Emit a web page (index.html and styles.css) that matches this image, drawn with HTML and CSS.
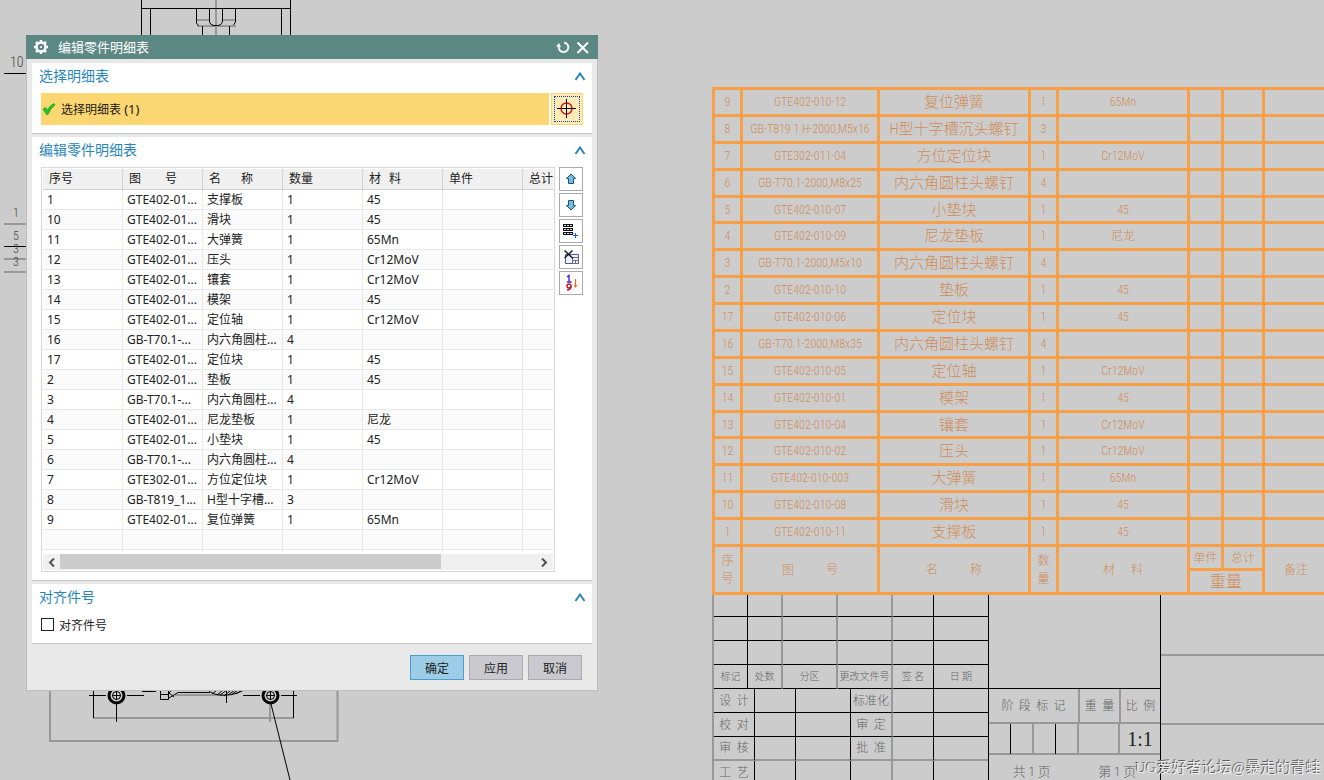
FILE: index.html
```html
<!DOCTYPE html>
<html lang="zh-CN">
<head>
<meta charset="utf-8">
<title>编辑零件明细表</title>
<link rel="stylesheet" href="styles.css">
</head>
<body>
<main class="canvas">
  <svg class="drawing" width="340" height="780" viewBox="0 0 340 780" aria-hidden="true">
    <g class="ln-gray">
      <path d="M216 0V36M196 20H209M223 20H235M197 26H236M4 224H27M4 259H27M4 272H27"/>
      <path d="M93 718H294M270 704V722M175 695H226"/>
    </g>
    <path class="ln-mid" d="M50 690V741H337.500V690"/>
    <g class="ln">
      <path d="M141.500 0V36M290.500 0V36M141.500 8.500H290.500M150.500 8V36M281.500 8V36M196.500 9V23L198.500 25.500M209.500 9V22Q210.500 25.500 214 25.500H218Q222.500 25 222.500 20V9M235.500 9V22L233.500 25M202.500 26V36M229.500 26V36"/>
      <path d="M4 73.500H27M4 246.500H27"/>
      <path d="M93.500 690V718M293.500 690V718M89 695.500H106M127 695.500H144M243 695.500H260M281 695.500H297M116.500 704V722M271 704L290 780M142 691.500H156M226.500 690V703"/>
      <path d="M160.500 691V699.500H168.500V691M160.500 694.500H168.500M169 698L178 692.500H210M169 693L174 697M172 690L168 694M208 690C214 697 232 697 244 690M212 694L217 690M217 695L223 690M220 695L227 690M224 696L230 691M228 695L235 690M231 695L238 690M236 694L242 690"/>
      <circle cx="116.500" cy="695.500" r="4"/><circle cx="270.500" cy="695.500" r="4"/>
      <path d="M112 695.500H121M116.500 691V700M266 695.500H275M270.500 691V700"/>
    </g>
    <circle class="ring" cx="116.500" cy="695.500" r="7.500"/><circle class="ring" cx="270.500" cy="695.500" r="7.500"/>
    <g class="note">
      <text x="10" y="67" class="note-large">10</text>
      <text x="13" y="217">1</text><text x="13" y="240">5</text><text x="13" y="253">3</text><text x="13" y="266">3</text>
    </g>
  </svg>

  <section class="sheet">
    <table class="parts">
      <colgroup><col class="p-no"><col class="p-code"><col class="p-name"><col class="p-qty"><col class="p-mat"><col class="p-unit"><col class="p-total"><col></colgroup>
      <tbody>
        <tr><td>9</td><td>GTE402-010-12</td><td class="cn">复位弹簧</td><td>1</td><td>65Mn</td><td></td><td></td><td></td></tr>
        <tr><td>8</td><td>GB-T819 1 H-2000,M5x16</td><td class="cn">H型十字槽沉头螺钉</td><td>3</td><td></td><td></td><td></td><td></td></tr>
        <tr><td>7</td><td>GTE302-011-04</td><td class="cn">方位定位块</td><td>1</td><td>Cr12MoV</td><td></td><td></td><td></td></tr>
        <tr><td>6</td><td>GB-T70.1-2000,M8x25</td><td class="cn">内六角圆柱头螺钉</td><td>4</td><td></td><td></td><td></td><td></td></tr>
        <tr class="tight"><td>5</td><td>GTE402-010-07</td><td class="cn">小垫块</td><td>1</td><td>45</td><td></td><td></td><td></td></tr>
        <tr><td>4</td><td>GTE402-010-09</td><td class="cn">尼龙垫板</td><td>1</td><td>尼龙</td><td></td><td></td><td></td></tr>
        <tr><td>3</td><td>GB-T70.1-2000,M5x10</td><td class="cn">内六角圆柱头螺钉</td><td>4</td><td></td><td></td><td></td><td></td></tr>
        <tr><td>2</td><td>GTE402-010-10</td><td class="cn">垫板</td><td>1</td><td>45</td><td></td><td></td><td></td></tr>
        <tr><td>17</td><td>GTE402-010-06</td><td class="cn">定位块</td><td>1</td><td>45</td><td></td><td></td><td></td></tr>
        <tr><td>16</td><td>GB-T70.1-2000,M8x35</td><td class="cn">内六角圆柱头螺钉</td><td>4</td><td></td><td></td><td></td><td></td></tr>
        <tr><td>15</td><td>GTE402-010-05</td><td class="cn">定位轴</td><td>1</td><td>Cr12MoV</td><td></td><td></td><td></td></tr>
        <tr><td>14</td><td>GTE402-010-01</td><td class="cn">模架</td><td>1</td><td>45</td><td></td><td></td><td></td></tr>
        <tr class="tight"><td>13</td><td>GTE402-010-04</td><td class="cn">镶套</td><td>1</td><td>Cr12MoV</td><td></td><td></td><td></td></tr>
        <tr><td>12</td><td>GTE402-010-02</td><td class="cn">压头</td><td>1</td><td>Cr12MoV</td><td></td><td></td><td></td></tr>
        <tr><td>11</td><td>GTE402-010-003</td><td class="cn">大弹簧</td><td>1</td><td>65Mn</td><td></td><td></td><td></td></tr>
        <tr><td>10</td><td>GTE402-010-08</td><td class="cn">滑块</td><td>1</td><td>45</td><td></td><td></td><td></td></tr>
        <tr><td>1</td><td>GTE402-010-11</td><td class="cn">支撑板</td><td>1</td><td>45</td><td></td><td></td><td></td></tr>
      </tbody>
      <tfoot>
        <tr><th rowspan="2">序<br>号</th><th rowspan="2"><span class="pair wide"><span>图</span><span>号</span></span></th><th rowspan="2"><span class="pair wide"><span>名</span><span>称</span></span></th><th rowspan="2">数<br>量</th><th rowspan="2"><span class="pair"><span>材</span><span>料</span></span></th><th>单件</th><th>总计</th><th rowspan="2">备注</th></tr>
        <tr><th colspan="2" class="weight">重量</th></tr>
      </tfoot>
    </table>

    <div class="title-block">
      <div class="tb-left">
        <div class="changes">
          <i></i><i></i><i></i><i></i><i></i><i></i>
          <i></i><i></i><i></i><i></i><i></i><i></i>
          <i></i><i></i><i></i><i></i><i></i><i></i>
          <span>标记</span><span>处数</span><span>分区</span><span>更改文件号</span><span>签 名</span><span>日 期</span>
        </div>
        <div class="signs">
          <span>设&nbsp; 计</span><i></i><i></i><span>标准化</span><i></i><i></i>
          <span>校&nbsp; 对</span><i></i><i></i><span>审&nbsp; 定</span><i></i><i></i>
          <span>审&nbsp; 核</span><i></i><i></i><span>批&nbsp; 准</span><i></i><i></i>
          <span>工&nbsp; 艺</span><i></i><i></i><i></i><i></i><i></i>
        </div>
      </div>
      <div class="tb-mid">
        <div class="blank"></div>
        <div class="stage"><span>阶&nbsp; 段&nbsp; 标&nbsp; 记</span><span>重&nbsp; 量</span><span>比&nbsp; 例</span></div>
        <div class="stage-values"><i></i><i></i><i></i><i></i><i></i><b>1:1</b></div>
        <div class="pages"><span>共 1 页</span><span>第 1 页</span></div>
      </div>
      <div class="tb-right"><i></i><i></i><i></i></div>
    </div>
  </section>

  <section class="dialog" role="dialog" aria-labelledby="dlg-title">
    <header class="titlebar">
      <svg width="16" height="16" viewBox="0 0 16 16" aria-hidden="true"><circle cx="8" cy="8" r="4.500" fill="none" stroke="#fff" stroke-width="2.500"/><path d="M8 1V3M8 13V15M1 8H3M13 8H15M3 3L4.500 4.500M11.500 11.500L13 13M3 13L4.500 11.500M11.500 4.500L13 3" stroke="#fff" stroke-width="2.500"/><circle cx="8" cy="8" r="1" fill="#fff"/></svg>
      <h1 id="dlg-title">编辑零件明细表</h1>
      <button class="tool" aria-label="重置"><svg width="14" height="14" viewBox="0 0 14 14"><path d="M8 2.500A4.800 4.800 0 1 1 2.800 6.500" fill="none" stroke="#fff" stroke-width="1.900"/><path d="M0 6.500L3 3L5 7Z" fill="#fff"/></svg></button>
      <button class="tool" aria-label="关闭"><svg width="14" height="14" viewBox="0 0 14 14"><path d="M1.500 2.500L12 13M12 2.500L1.500 13" stroke="#fff" stroke-width="2"/></svg></button>
    </header>
    <div class="dialog-body">
      <section class="panel">
        <h2>选择明细表<button class="fold" aria-label="折叠"><svg width="12" height="10" viewBox="0 0 12 10"><path d="M1.500 9L6 2.500L10.500 9" fill="none" stroke="#2a86b8" stroke-width="2"/></svg></button></h2>
        <div class="pick-row">
          <div class="pick-label">
            <svg width="14" height="14" viewBox="0 0 14 14" aria-hidden="true"><path d="M1 7L3.500 5.500L5.500 8Q8 3 12 1.500L13 3Q8.500 6.500 6 12.500H4.500Z" fill="#20c82c" stroke="#109018" stroke-width=".6"/></svg>
            <span>选择明细表 <span class="latin">(1)</span></span>
          </div>
          <button class="pick" aria-label="选择对象"><span class="focus"><svg width="20" height="20" viewBox="0 0 20 20"><circle cx="9.500" cy="9.500" r="5.500" fill="none" stroke="#e01010" stroke-width="1.400"/><path d="M0 9.500H19M9.500 0V19" stroke="#000" stroke-width="1"/></svg></span></button>
        </div>
      </section>

      <section class="panel">
        <h2>编辑零件明细表<button class="fold" aria-label="折叠"><svg width="12" height="10" viewBox="0 0 12 10"><path d="M1.500 9L6 2.500L10.500 9" fill="none" stroke="#2a86b8" stroke-width="2"/></svg></button></h2>
        <div class="edit-row">
          <div class="listbox">
            <div class="viewport">
              <table class="list">
                <thead><tr><th>序号</th><th><span class="pair head">图<span>号</span></span></th><th><span class="pair head-mid">名<span>称</span></span></th><th>数量</th><th><span class="pair head-small">材<span>料</span></span></th><th>单件</th><th>总计</th></tr></thead>
                <tbody>
                  <tr><td>1</td><td>GTE402-01...</td><td class="zh">支撑板</td><td>1</td><td>45</td><td></td><td></td></tr>
                  <tr><td>10</td><td>GTE402-01...</td><td class="zh">滑块</td><td>1</td><td>45</td><td></td><td></td></tr>
                  <tr><td>11</td><td>GTE402-01...</td><td class="zh">大弹簧</td><td>1</td><td>65Mn</td><td></td><td></td></tr>
                  <tr><td>12</td><td>GTE402-01...</td><td class="zh">压头</td><td>1</td><td>Cr12MoV</td><td></td><td></td></tr>
                  <tr><td>13</td><td>GTE402-01...</td><td class="zh">镶套</td><td>1</td><td>Cr12MoV</td><td></td><td></td></tr>
                  <tr><td>14</td><td>GTE402-01...</td><td class="zh">模架</td><td>1</td><td>45</td><td></td><td></td></tr>
                  <tr><td>15</td><td>GTE402-01...</td><td class="zh">定位轴</td><td>1</td><td>Cr12MoV</td><td></td><td></td></tr>
                  <tr><td>16</td><td>GB-T70.1-...</td><td class="zh">内六角圆柱...</td><td>4</td><td></td><td></td><td></td></tr>
                  <tr><td>17</td><td>GTE402-01...</td><td class="zh">定位块</td><td>1</td><td>45</td><td></td><td></td></tr>
                  <tr><td>2</td><td>GTE402-01...</td><td class="zh">垫板</td><td>1</td><td>45</td><td></td><td></td></tr>
                  <tr><td>3</td><td>GB-T70.1-...</td><td class="zh">内六角圆柱...</td><td>4</td><td></td><td></td><td></td></tr>
                  <tr><td>4</td><td>GTE402-01...</td><td class="zh">尼龙垫板</td><td>1</td><td class="zh">尼龙</td><td></td><td></td></tr>
                  <tr><td>5</td><td>GTE402-01...</td><td class="zh">小垫块</td><td>1</td><td>45</td><td></td><td></td></tr>
                  <tr><td>6</td><td>GB-T70.1-...</td><td class="zh">内六角圆柱...</td><td>4</td><td></td><td></td><td></td></tr>
                  <tr><td>7</td><td>GTE302-01...</td><td class="zh">方位定位块</td><td>1</td><td>Cr12MoV</td><td></td><td></td></tr>
                  <tr><td>8</td><td>GB-T819_1...</td><td class="zh">H型十字槽...</td><td>3</td><td></td><td></td><td></td></tr>
                  <tr><td>9</td><td>GTE402-01...</td><td class="zh">复位弹簧</td><td>1</td><td>65Mn</td><td></td><td></td></tr>
                  <tr><td></td><td></td><td></td><td></td><td></td><td></td><td></td></tr>
                  <tr><td></td><td></td><td></td><td></td><td></td><td></td><td></td></tr>
                </tbody>
              </table>
            </div>
            <div class="scrollbar">
              <button aria-label="向左"><svg width="7" height="9" viewBox="0 0 7 9"><path d="M6 .5L2 4.500L6 8.500" fill="none" stroke="#505050" stroke-width="2"/></svg></button>
              <div class="track"><div class="thumb"></div></div>
              <button aria-label="向右"><svg width="7" height="9" viewBox="0 0 7 9"><path d="M1 .5L5 4.500L1 8.500" fill="none" stroke="#505050" stroke-width="2"/></svg></button>
            </div>
          </div>
          <div class="side">
            <button aria-label="上移"><svg width="16" height="16" viewBox="0 0 16 16"><path d="M8 3L12.500 7.500H10.500V12.500H5.500V7.500H3.500Z" fill="#6cc4dc" stroke="#24507c"/></svg></button>
            <button aria-label="下移"><svg width="16" height="16" viewBox="0 0 16 16"><path d="M8 13L12.500 8.500H10.500V3.500H5.500V8.500H3.500Z" fill="#6cc4dc" stroke="#24507c"/></svg></button>
            <button aria-label="添加行"><svg width="16" height="16" viewBox="0 0 16 16"><path d="M0 1H10V4H0ZM0 5H10V8H0ZM0 9H10V12H0Z" fill="#101010"/><path d="M1 2.500H3M4 2.500H6M7 2.500H9M1 6.500H3M4 6.500H6M7 6.500H9M1 10.500H3M4 10.500H6M7 10.500H9" stroke="#d8d8f0"/><path d="M10 12.500H15M12.500 10V15" stroke="#1060f0"/></svg></button>
            <button aria-label="删除行"><svg width="16" height="16" viewBox="0 0 16 16"><path d="M2.500 5.500H15.500V14.500H2.500Z" fill="#eef0ff" stroke="#4858b8"/><path d="M9.500 14V8.500H15.500V14.500H9.500M9.500 11.500H15.500M12.500 11.500V14" fill="none" stroke="#707080"/><path d="M1.500 1.500L10 9.500M9.500 1.500L1.500 9" stroke="#202020" stroke-width="1.500"/></svg></button>
            <button aria-label="排序"><svg width="16" height="18" viewBox="0 0 16 18"><path d="M4 3L6 1.500V8M4 8H8.500" fill="none" stroke="#4820d8" stroke-width="1.400"/><circle cx="6" cy="12" r="2" fill="none" stroke="#c01830" stroke-width="1.500"/><path d="M8 12Q8 16 4 16" fill="none" stroke="#c01830" stroke-width="1.500"/><path d="M12.500 5V13" stroke="#d07020" stroke-width="1.300"/><path d="M10.500 11L12.500 14L14.500 11Z" fill="#e07820"/></svg></button>
          </div>
        </div>
      </section>

      <section class="panel">
        <h2>对齐件号<button class="fold" aria-label="折叠"><svg width="12" height="10" viewBox="0 0 12 10"><path d="M1.500 9L6 2.500L10.500 9" fill="none" stroke="#2a86b8" stroke-width="2"/></svg></button></h2>
        <label class="check"><input type="checkbox">对齐件号</label>
      </section>
      <footer class="actions"><button class="primary">确定</button><button>应用</button><button>取消</button></footer>
    </div>
  </section>

  <p class="watermark">UG爱好者论坛@暴走的青蛙</p>
</main>
</body>
</html>
```
FILE: styles.css
```css
* { box-sizing: border-box; }
body { margin: 0; background: #ccc; font-family: "Noto Sans", "Noto Sans CJK SC", sans-serif; font-size: 12px; color: #222; }
h1, h2, p { margin: 0; font-weight: 400; }
button { padding: 0; font: inherit; color: inherit; border: 0; background: none; display: flex; align-items: center; justify-content: center; }
i { display: block; }

.canvas { position: relative; height: 100vh; overflow: hidden; }
.drawing { position: absolute; left: 0; top: 0; }
.ln, .ln-gray, .ln-mid, .ring { fill: none; stroke: #000; stroke-width: 1; }
.ln-gray { stroke: #989898; stroke-width: 2; }
.ln-mid { stroke: #989898; stroke-width: 2; }
.ring { stroke-width: 3; }
.note { font-family: "Roboto Condensed", "Liberation Serif", sans-serif; font-size: 12px; font-weight: 300; fill: #444; }
.note-large { font-size: 14px; }

/* parts list */
.sheet { position: absolute; left: 712px; right: -6px; top: 87px; font-family: "Roboto Condensed", "Liberation Serif", "Noto Sans CJK SC", sans-serif; }
.parts { width: 100%; table-layout: fixed; border-collapse: collapse; color: #d08c58; font-size: 12px; line-height: 14px; }
.parts td, .parts th { border: 3px solid #f8a048; padding: 0; text-align: center; font-weight: 300; white-space: nowrap; }
.parts tr { height: 27px; }
.parts .tight { height: 26px; }
.parts tfoot tr { height: 24px; }
.parts .cn { font-size: 15px; }
.parts th { font-size: 12px; line-height: 18px; }
.parts .weight { font-size: 16px; }
.p-no, .p-qty { width: 28px; }
.p-code { width: 137px; }
.p-name { width: 151px; }
.p-mat { width: 131px; }
.p-unit { width: 34px; }
.p-total { width: 41px; }
.pair { display: inline-flex; gap: 16px; }
.pair.wide { gap: 32px; }

/* drawing title block */
.title-block { display: flex; height: 220px; color: #666; font-size: 12px; font-weight: 300; line-height: 14px; white-space: nowrap; }
.title-block span { display: flex; align-items: center; justify-content: center; }
.tb-left { width: 277px; border-left: 2px solid #989898; border-right: 1px solid #000; }
.changes { display: grid; grid-template-columns: 34px 35px 55px 55px 41px 1fr; grid-template-rows: 22px 24px 24px 24px; font-size: 10px; }
.signs { display: grid; grid-template-columns: 41px 41px 55px 42px 41px 1fr; grid-auto-rows: 24px; }
.changes > *, .signs > * { border-right: 1px solid #000; border-bottom: 1px solid #000; }
.changes > :nth-child(6n+2), .changes > :nth-child(6n+3), .changes > :nth-child(6n+4), .signs > :nth-child(6n+4) { border-right: 2px solid #989898; }
.signs > :nth-child(n+13):nth-child(-n+18) { border-bottom: 2px solid #989898; }
.changes > :nth-child(6n), .signs > :nth-child(6n) { border-right: 0; }
.tb-mid { width: 172px; border-right: 1px solid #000; }
.blank { height: 94px; border-bottom: 1px solid #000; }
.stage { display: grid; grid-template-columns: 89px 41px 1fr; height: 35px; border-bottom: 2px solid #989898; }
.stage span + span { border-left: 2px solid #989898; }
.stage-values { display: grid; grid-template-columns: 22px 23px 22px 23px 41px 1fr; height: 31px; border-bottom: 2px solid #989898; }
.stage-values i { border-right: 2px solid #989898; }
.stage-values i:nth-child(1), .stage-values i:nth-child(3) { border-right: 1px solid #000; }
.stage-values b { font-family: "Liberation Serif", serif; font-size: 20px; font-weight: 400; line-height: 30px; text-align: center; color: #222; }
.pages { display: flex; justify-content: space-around; padding-top: 10px; font-size: 13px; }
.tb-right { flex: 1; display: grid; grid-template-rows: 59px 69px 1fr; }
.tb-right i + i { border-top: 2px solid #989898; }

/* dialog */
.dialog { position: absolute; left: 26px; top: 35px; width: 572px; }
.titlebar { display: flex; align-items: center; gap: 6px; height: 24px; padding: 0 8px 0 7px; background: #5c8883; color: #fff; }
.titlebar h1 { flex: 1; padding-left: 3px; font-size: 13px; line-height: 24px; }
.tool { width: 14px; height: 24px; }
.dialog-body { display: flex; flex-direction: column; gap: 3px; padding: 4px 5px 10px; background: #e8e8e8; border: 1px solid #bebebe; border-top: 0; }
.panel { padding: 0 9px 8px; background: #fff; border-bottom: 1px solid #c4c4c4; }
.panel h2 { display: flex; justify-content: space-between; align-items: center; height: 30px; margin: 0 -3px 0 -2px; padding-bottom: 4px; font-size: 14px; line-height: 20px; color: #2a86b8; }
.fold { width: 12px; height: 12px; }
.pick-row { display: flex; gap: 2px; height: 32px; }
.pick-label { flex: 1; display: flex; align-items: center; gap: 5px; padding-left: 1px; background: #fcd670; }
.latin { font-size: 13px; }
.pick { width: 32px; border: 1px solid #fcd670; background: #fcebb4; }
.focus { padding: 2px; width: 26px; height: 26px; border: 1px dotted #1040b0; }
.focus svg { display: block; }
.edit-row { display: flex; gap: 4px; }
.listbox { flex: 1; min-width: 0; padding: 1px; border: 1px solid #d8d8d8; }
.viewport { height: 383px; overflow: hidden; margin-bottom: 2px; }
.list { width: 560px; table-layout: fixed; border-collapse: separate; border-spacing: 0; font-size: 12px; line-height: 16px; }
.list th { height: 21px; padding: 0 0 0 6px; text-align: left; font-weight: 400; background: #f0f0f0; border-right: 1px solid #d0d0d0; border-bottom: 1px solid #d0d0d0; white-space: nowrap; }
.list td { height: 20px; padding: 0 0 0 4px; border-right: 1px solid #e8e8e8; border-bottom: 1px solid #e8e8e8; white-space: nowrap; }
.list tbody tr:nth-child(even) { background: #fafafa; }
.pair.head { gap: 24px; }
.pair.head-mid { gap: 20px; }
.pair.head-small { gap: 8px; }
.scrollbar { display: flex; height: 16px; background: #f0f0f0; }
.scrollbar button { width: 17px; }
.track { flex: 1; }
.thumb { width: 80%; height: 15px; background: #ccc; }
.side { display: flex; flex-direction: column; gap: 2px; }
.side button { width: 24px; height: 24px; border: 1px solid #aaa; background: #fff; }
.check { display: flex; align-items: center; gap: 5px; height: 21px; }
.check input { appearance: none; width: 13px; height: 13px; margin: 0; border: 1px solid #222; background: #fff; }
.actions { display: flex; justify-content: flex-end; gap: 5px; padding: 8px 10px 0 0; }
.actions button { width: 54px; height: 25px; border: 1px solid #acacac; background: #c9c9cf; }
.actions .primary { border-color: #4ca0d0; background: #9ccce6; }

.watermark { position: absolute; right: 3px; bottom: 1px; font-family: "Liberation Serif", "Noto Sans CJK SC", serif; font-size: 15px; line-height: 22px; color: #ececec; text-shadow: -1px -1px 0 #606060; }
```
